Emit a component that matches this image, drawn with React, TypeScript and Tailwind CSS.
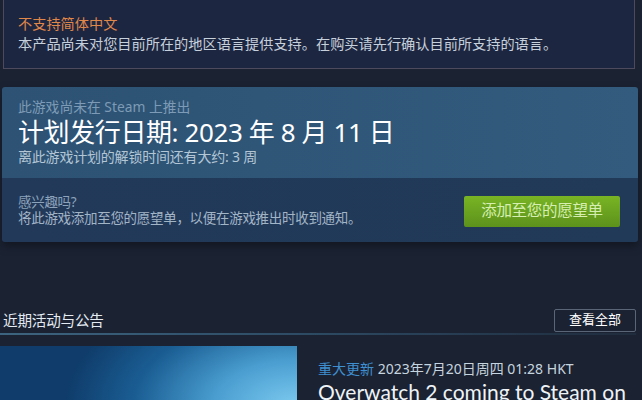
import React from "react";

const cjk = { fontFamily: '"Noto Sans", "Noto Sans CJK SC", sans-serif' };

export default function App() {
  return (
    <div
      className="w-[642px] h-[400px] overflow-hidden bg-[#1b2232] relative"
      style={cjk}
    >
      {/* Language warning */}
      <div className="ml-[3px] w-[632px] h-[69px] border-x border-b border-[#4d4a5d] bg-[#1d2640] pl-[14px] pt-[14px]">
        <div className="text-[14.2px] leading-[20px] text-[#e0874a]">
          不支持简体中文
        </div>
        <div className="text-[14.2px] leading-[20px] text-[#c6d0dc]">
          本产品尚未对您目前所在的地区语言提供支持。在购买请先行确认目前所支持的语言。
        </div>
      </div>

      {/* Coming soon box */}
      <div className="ml-[2px] mt-[18px] w-[636px] rounded-[3px] overflow-hidden shadow-[0_4px_10px_rgba(0,0,0,0.35)]">
        <div className="h-[91px] bg-gradient-to-r from-[#2d5273] to-[#325b7d] pl-[16px] pt-[10px]">
          <div className="text-[13.8px] leading-[20px] text-[#7d9bb6]">
            此游戏尚未在 Steam 上推出
          </div>
          <div className="text-[26px] leading-[30px] text-white tracking-[-0.4px]">
            计划发行日期: 2023 年 8 月 11 日
          </div>
          <div className="text-[14px] leading-[20px] text-[#b3c6d6] tracking-[-0.2px]">
            离此游戏计划的解锁时间还有大约: 3 周
          </div>
        </div>
        <div className="h-[64px] bg-gradient-to-r from-[#22395a] to-[#213a57] flex items-center pl-[16px] pr-[18px]">
          <div className="flex-1">
            <div className="text-[13.5px] leading-[16px] text-[#8ca3bb] tracking-[-0.3px]">
              感兴趣吗?
            </div>
            <div className="text-[13.5px] leading-[16px] text-[#a2b5c7] tracking-[-0.3px]">
              将此游戏添加至您的愿望单，以便在游戏推出时收到通知。
            </div>
          </div>
          <div className="w-[156px] h-[31px] rounded-[2px] bg-gradient-to-b from-[#78b424] to-[#5d921c] flex items-center justify-center text-[15.5px] text-[#d6efb0] tracking-[-0.3px] mt-[2px]">
            添加至您的愿望单
          </div>
        </div>
      </div>

      {/* Recent events header */}
      <div className="mt-[64px] w-[642px] pr-[6px]">
        <div className="flex items-center justify-between h-[28px]">
          <div className="pl-[3px] text-[14.6px] text-[#e4ebf2] tracking-[-0.2px] pt-[2px]">
            近期活动与公告
          </div>
          <div className="w-[82px] h-[23px] border border-[#5a6677] rounded-[2px] flex items-center justify-center text-[13px] text-white">
            查看全部
          </div>
        </div>
        <div className="h-[2px] mt-[-1px] bg-gradient-to-r from-[#3d6480] via-[#2d4a63] to-[#1f2c3d]" />
      </div>

      {/* Event row */}
      <div className="flex mt-[11px]">
        <div
          className="w-[297px] h-[60px] shrink-0"
          style={{
            background:
              "radial-gradient(ellipse 230px 130px at 295px 60px, #7ccaf0 0%, #4a9ed0 35%, #1a5d93 70%, #0f3c6a 100%)",
          }}
        />
        <div className="pl-[21px] pt-[14px]">
          <div className="text-[14px] leading-[18px] text-[#c6d4df] whitespace-nowrap">
            <span className="text-[#3f8fd0]">重大更新</span> 2023年7月20日周四 01:28 HKT
          </div>
          <div
            className="text-[21px] leading-[26px] text-[#eef3f7] mt-[1px] whitespace-nowrap"
            style={{ fontFamily: '"Lato", "Noto Sans", sans-serif' }}
          >
            Overwatch 2 coming to Steam on
          </div>
        </div>
      </div>
    </div>
  );
}
